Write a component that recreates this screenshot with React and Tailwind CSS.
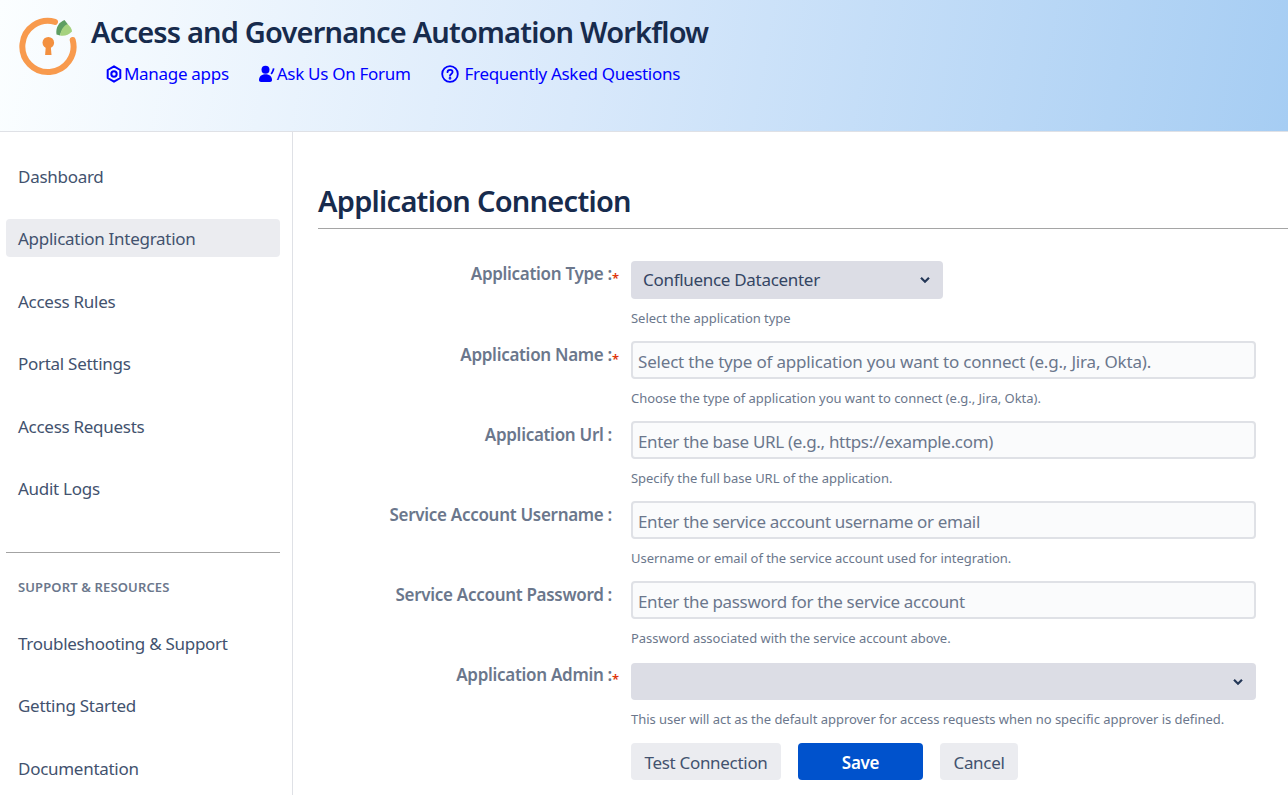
import React from 'react';

const navTop = ['Dashboard', 'Application Integration', 'Access Rules', 'Portal Settings', 'Access Requests', 'Audit Logs'];
const navBottom = ['Troubleshooting & Support', 'Getting Started', 'Documentation'];

const fields = [
  { label: 'Application Name', required: true, track: 'tracking-[-0.19px]', placeholder: 'Select the type of application you want to connect (e.g., Jira, Okta).', help: 'Choose the type of application you want to connect (e.g., Jira, Okta).' },
  { label: 'Application Url', track: 'tracking-[-0.33px]', placeholder: 'Enter the base URL (e.g., https://example.com)', help: 'Specify the full base URL of the application.' },
  { label: 'Service Account Username', track: 'tracking-[-0.33px]', placeholder: 'Enter the service account username or email', help: 'Username or email of the service account used for integration.' },
  { label: 'Service Account Password', track: 'tracking-[-0.33px]', placeholder: 'Enter the password for the service account', help: 'Password associated with the service account above.' },
];

function Logo() {
  return (
    <svg width="60" height="60" viewBox="0 0 60 60" fill="none" className="shrink-0">
      <path d="M37 5.900A25.600 25.600 0 1 0 54.700 24" stroke="#F89A4D" strokeWidth="6" strokeLinecap="round" />
      <circle cx="30.300" cy="26.700" r="5.800" fill="#F3903F" />
      <path d="M28 28h4.600l.9 11h-6.400z" fill="#F3903F" />
      <path d="M38.500 18.500C37.500 11.500 41 6 46.500 4l3.500 4.500C46 11 43 14.500 42 19.500z" fill="#5E9E62" />
      <path d="M42 19.500C43 13.500 46 9.500 49.500 8c2.500 2 4.500 5 4.500 7.500-3 3.500-8 5-12 4z" fill="#A5D27F" />
    </svg>
  );
}

function HexIcon() {
  return (
    <svg width="16" height="18" viewBox="0 0 16 18" fill="none" stroke="#0000ff" strokeWidth="2">
      <path d="M8 1.300L14.300 5v8L8 16.700 1.700 13V5z" strokeLinejoin="round" />
      <circle cx="8" cy="9" r="2.700" />
    </svg>
  );
}

function ForumIcon() {
  return (
    <svg width="16" height="18" viewBox="0 0 16 18" fill="#0000ff">
      <circle cx="6.500" cy="4.800" r="4" />
      <path d="M0 15c0-3.600 2.400-5.800 6.500-5.800s6.500 2.200 6.500 5.800c0 1.200-.8 2-2 2H2c-1.200 0-2-.8-2-2z" />
      <path d="M11.500 8.500c1.200-1.600 1.900-3.300 2.300-5.300l1.700.4c-.4 2.400-1.400 4.400-2.700 5.900z" />
    </svg>
  );
}

function HelpIcon() {
  return (
    <svg width="18" height="18" viewBox="0 0 18 18" fill="none" stroke="#0000ff" strokeWidth="1.800">
      <circle cx="9" cy="9" r="7.800" />
      <path d="M6.500 7.200c0-1.500 1.100-2.400 2.600-2.400s2.500.9 2.500 2.200c0 1.900-2.600 1.900-2.600 3.800" strokeLinecap="round" />
      <circle cx="9" cy="13.300" r="0.500" fill="#0000ff" />
    </svg>
  );
}

function Chevron() {
  return (
    <svg width="10" height="7" viewBox="0 0 10 7" fill="none" stroke="#253858" strokeWidth="2.200" className="pointer-events-none absolute right-[13px] top-1/2 -translate-y-1/2">
      <path d="M1 1.200l4 4 4-4" />
    </svg>
  );
}

function Label({ text, required, tight }) {
  return (
    <label className={`flex w-[313px] shrink-0 justify-end pr-[12px] text-[17px] leading-[26px] font-semibold text-[#6b778c] ${tight ? '' : 'pt-[1px]'}`}>
      <span className="tracking-[-0.3px]">{text} :</span>
      <span className={required ? 'w-[7px] pt-[4px] text-left text-[13px] text-[#de350b]' : 'w-[7px]'}>{required ? '*' : ''}</span>
    </label>
  );
}

function Help({ children }) {
  return <p className="mt-[10px] text-[13px] leading-[18px] tracking-[-0.03px] text-[#6b778c]">{children}</p>;
}

export default function App() {
  return (
    <div className="h-screen overflow-hidden bg-white font-['Noto_Sans',sans-serif] text-[#172b4d]">
      <header className="flex h-[132px] border-b border-[#dfe1e6] bg-[linear-gradient(100deg,#fbfeff_0%,#d9e9fb_45%,#a6cdf3_100%)] pl-[18px] pt-[16px]">
        <Logo />
        <div className="ml-[13px] -mt-[1px]">
          <h1 className="text-[29px] leading-[34px] font-semibold tracking-[-0.82px] text-[#172b4d]">Access and Governance Automation Workflow</h1>
          <nav className="mt-[12px] ml-[15px] flex items-center text-[#0000ff] text-[17px] leading-[26px] tracking-[-0.3px]">
            <a className="flex items-center gap-[2px]"><HexIcon />Manage apps</a>
            <a className="ml-[30px] flex items-center gap-[2px]"><ForumIcon />Ask Us On Forum</a>
            <a className="ml-[30px] flex items-center gap-[6px]"><HelpIcon />Frequently Asked Questions</a>
          </nav>
        </div>
      </header>

      <div className="flex h-[663px]">
        <aside className="w-[293px] shrink-0 border-r border-[#dfe1e6] pl-[6px] pr-[12px] pt-[24.9px]">
          <ul className="flex flex-col gap-[24.5px]">
            {navTop.map((item) => (
              <li key={item} className={`flex h-[38px] items-center rounded-[4px] px-[12px] pt-[1px] text-[17px] tracking-[-0.28px] text-[#42526e] ${item === 'Application Integration' ? 'bg-[#ebecf0]' : ''}`}>{item}</li>
            ))}
          </ul>
          <hr className="mt-[44.3px] border-[#a3a3a3]" />
          <div className="mt-[26px] px-[12px] text-[13px] leading-[16px] font-semibold tracking-[0.13px] text-[#6b778c]">SUPPORT &amp; RESOURCES</div>
          <ul className="mt-[29.8px] flex flex-col gap-[24.500px]">
            {navBottom.map((item) => (
              <li key={item} className="flex h-[38px] items-center px-[12px] text-[17px] tracking-[-0.28px] text-[#42526e]">{item}</li>
            ))}
          </ul>
        </aside>

        <main className="min-w-0 flex-1 pl-[25px]">
          <h2 className="mt-[49px] text-[29px] leading-[40px] font-semibold tracking-[-0.73px] text-[#172b4d]">Application Connection</h2>
          <div className="mt-[7px] h-[1px] bg-[#a5a5a5]" />

          <form className="mt-[32px] flex flex-col">
            <div className="flex h-[80px]">
              <Label text="Application Type" required tight />
              <div>
                <div className="relative h-[38px] w-[312px]">
                  <select defaultValue="Confluence Datacenter" className="h-full w-full appearance-none rounded-[4px] bg-[#dcdde5] px-[12px] text-[17px] tracking-[-0.3px] text-[#344563] outline-none">
                    <option>Confluence Datacenter</option>
                  </select>
                  <Chevron />
                </div>
                <Help>Select the application type</Help>
              </div>
            </div>

            {fields.map((f) => (
              <div key={f.label} className="flex h-[80px]">
                <Label text={f.label} required={f.required} />
                <div className="w-[625px]">
                  <input placeholder={f.placeholder} className={`h-[38px] w-full rounded-[4px] border-2 border-[#dfe1e6] bg-[#fafbfc] px-[5px] pt-[2px] text-[17px] outline-none placeholder:text-[#6b778c] ${f.track}`} />
                  <Help>{f.help}</Help>
                </div>
              </div>
            ))}

            <div className="flex h-[82px]">
              <Label text="Application Admin" required />
              <div className="w-[625px] pt-[2px]">
                <div className="relative h-[37px]">
                  <select className="h-full w-full appearance-none rounded-[4px] bg-[#dcdde5] outline-none" />
                  <Chevron />
                </div>
                <Help>This user will act as the default approver for access requests when no specific approver is defined.</Help>
              </div>
            </div>

            <div className="ml-[313px] flex gap-[17px]">
              <button type="button" className="h-[37px] w-[150px] rounded-[4px] bg-[#ebecf0] pt-[2px] text-[17px] tracking-[-0.3px] text-[#42526e]">Test Connection</button>
              <button type="button" className="h-[37px] w-[125px] rounded-[4px] bg-[#0052cc] pt-[2px] text-[17px] font-semibold tracking-[-0.3px] text-white">Save</button>
              <button type="button" className="h-[37px] w-[78px] rounded-[4px] bg-[#ebecf0] pt-[2px] text-[17px] tracking-[-0.3px] text-[#42526e]">Cancel</button>
            </div>
          </form>
        </main>
      </div>
    </div>
  );
}
